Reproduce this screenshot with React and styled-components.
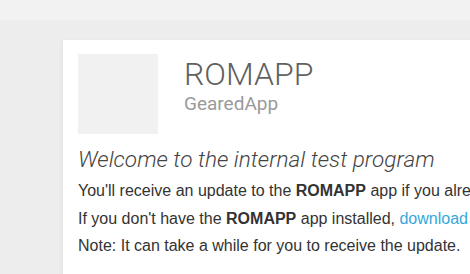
import React from 'react';
import styled, { createGlobalStyle } from 'styled-components';

const GlobalStyle = createGlobalStyle`
  html, body {
    margin: 0;
    padding: 0;
    background: #ededed;
    overflow: hidden;
  }
`;

const Page = styled.div`
  width: 470px;
  height: 274px;
  display: flex;
  flex-direction: column;
  overflow: hidden;
`;

const TopBar = styled.div`
  height: 20px;
  flex-shrink: 0;
  background: #f2f2f2;
`;

const Main = styled.div`
  flex: 1;
  min-height: 0;
  overflow: hidden;
  padding: 20px 0 0 63px;
  background: #ededed;
`;

const Card = styled.div`
  width: 560px;
  height: 260px;
  background: #fff;
  padding: 14px 15px;
  box-sizing: border-box;
  box-shadow: -2px 0 3px rgba(0, 0, 0, 0.03);
`;

const AppHeader = styled.div`
  display: flex;
  gap: 26px;
`;

const AppIcon = styled.div`
  width: 80px;
  height: 80px;
  background: #f1f1f1;
  flex-shrink: 0;
`;

const TitleBlock = styled.div`
  display: flex;
  flex-direction: column;
  font-family: Roboto, "Noto Sans", sans-serif;
`;

const AppName = styled.div`
  font-size: 32px;
  font-weight: 300;
  line-height: 38px;
  margin-top: 1px;
  color: #616161;
`;

const Developer = styled.div`
  font-size: 19px;
  line-height: 21px;
  color: #9a9a9a;
`;

const Welcome = styled.h1`
  margin: 13px 0 8px;
  font-family: Roboto, "Noto Sans", sans-serif;
  font-size: 22.6px;
  font-weight: 300;
  font-style: italic;
  line-height: 26px;
  color: #444;
  white-space: nowrap;
`;

const Line = styled.p`
  margin: 0 0 7.5px;
  font-family: "Liberation Sans", Arial, sans-serif;
  font-size: 16px;
  line-height: 20px;
  color: #333;
  white-space: nowrap;
`;

const Link = styled.a`
  color: #35a7dc;
  text-decoration: none;
`;

export default function App() {
  return (
    <Page>
      <GlobalStyle />
      <TopBar />
      <Main>
        <Card>
          <AppHeader>
            <AppIcon />
            <TitleBlock>
              <AppName>ROMAPP</AppName>
              <Developer>GearedApp</Developer>
            </TitleBlock>
          </AppHeader>
          <Welcome>Welcome to the internal test program</Welcome>
          <Line>
            You'll receive an update to the <b>ROMAPP</b> app if you already have it installed.
          </Line>
          <Line>
            If you don't have the <b>ROMAPP</b> app installed, <Link href="#">download it</Link>.
          </Line>
          <Line>Note: It can take a while for you to receive the update.</Line>
        </Card>
      </Main>
    </Page>
  );
}
